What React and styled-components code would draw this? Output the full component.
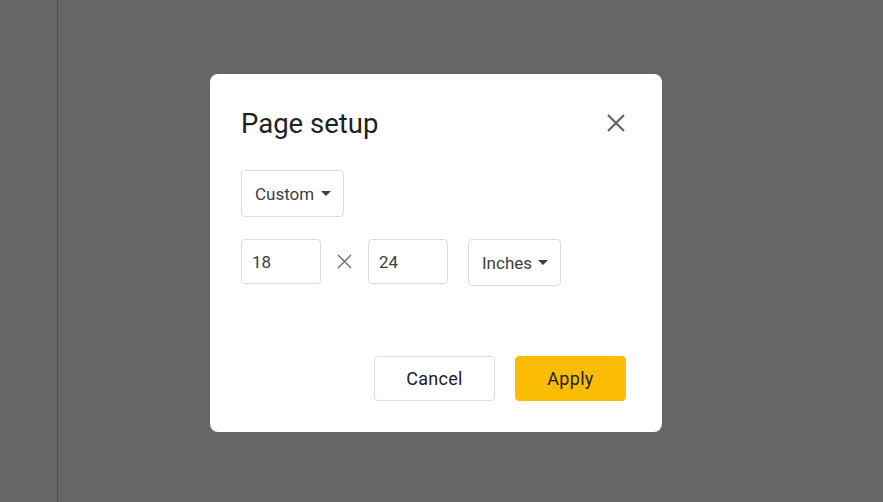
import styled, { createGlobalStyle } from 'styled-components'

const Global = createGlobalStyle`
  html, body {
    margin: 0;
    padding: 0;
    background: #666666;
    font-family: Roboto, 'Noto Sans', sans-serif;
  }
`

const App = () => {
  return (
    <>
      <Global />
      <Page>
        <Gutter />
        <Canvas />
      </Page>
      <Overlay>
        <Dialog>
          <Header>
            <Title>Page setup</Title>
            <CloseButton aria-label="Close">
              <svg width="20" height="20" viewBox="0 0 20 20">
                <path d="M2 2 L18 18 M18 2 L2 18" stroke="#5f6368" strokeWidth="2.2" fill="none" />
              </svg>
            </CloseButton>
          </Header>

          <Select $width={103}>
            Custom
            <Caret />
          </Select>

          <SizeRow>
            <NumberBox>18</NumberBox>
            <Times>
              <svg width="15" height="15" viewBox="0 0 15 15">
                <path d="M1 1 L14 14 M14 1 L1 14" stroke="#5f6368" strokeWidth="1.2" fill="none" />
              </svg>
            </Times>
            <NumberBox>24</NumberBox>
            <Select $width={93} $gapLeft={20}>
              Inches
              <Caret />
            </Select>
          </SizeRow>

          <Actions>
            <Button>Cancel</Button>
            <Button $primary>Apply</Button>
          </Actions>
        </Dialog>
      </Overlay>
    </>
  )
}

export default App

const Page = styled.div`
  display: flex;
  height: 100vh;
`
const Gutter = styled.div`
  width: 57px;
  border-right: 1px solid #4f4f4f;
`
const Canvas = styled.div`
  flex: 1;
`
const Overlay = styled.div`
  position: fixed;
  inset: 0;
  display: flex;
  align-items: flex-start;
  justify-content: flex-start;
  padding: 74px 0 0 210px;
`
const Dialog = styled.div`
  width: 452px;
  box-sizing: border-box;
  background: #fff;
  border-radius: 8px;
  padding: 32px 35px 31px 31px;
  display: flex;
  flex-direction: column;
  align-items: flex-start;
`
const Header = styled.div`
  width: 100%;
  display: flex;
  align-items: center;
  justify-content: space-between;
  margin-bottom: 28px;
`
const Title = styled.h1`
  margin: 0;
  font-size: 27.5px;
  line-height: 36px;
  font-weight: 400;
  color: #202124;
`
const CloseButton = styled.button`
  border: none;
  background: none;
  padding: 0;
  width: 22px;
  height: 22px;
  margin-top: -2px;
  display: flex;
  align-items: center;
  justify-content: center;
  cursor: pointer;
`
const Select = styled.div`
  box-sizing: border-box;
  width: ${p => p.$width}px;
  height: 47px;
  margin-left: ${p => p.$gapLeft || 0}px;
  border: 1px solid #dadce0;
  border-radius: 4px;
  display: flex;
  align-items: center;
  justify-content: space-between;
  padding: 0 12px 0 13px;
  font-size: 17px;
  color: #3c4043;
`
const Caret = styled.span`
  width: 0;
  height: 0;
  border-left: 5px solid transparent;
  border-right: 5px solid transparent;
  border-top: 5px solid #3c4043;
`
const SizeRow = styled.div`
  display: flex;
  align-items: flex-start;
  margin-top: 22px;
`
const NumberBox = styled.div`
  box-sizing: border-box;
  width: 80px;
  height: 45px;
  border: 1px solid #dadce0;
  border-radius: 4px;
  display: flex;
  align-items: center;
  padding-left: 10px;
  font-size: 17px;
  color: #3c4043;
`
const Times = styled.div`
  width: 47px;
  height: 45px;
  display: flex;
  align-items: center;
  justify-content: center;
`
const Actions = styled.div`
  width: 100%;
  display: flex;
  justify-content: flex-end;
  gap: 20px;
  margin-top: 70px;
  padding-right: 1px;
  box-sizing: border-box;
`
const Button = styled.button`
  box-sizing: border-box;
  height: 45px;
  width: ${p => (p.$primary ? 111 : 121)}px;
  border-radius: 4px;
  border: 1px solid ${p => (p.$primary ? '#fbbc04' : '#dadce0')};
  background: ${p => (p.$primary ? '#fbbc04' : '#fff')};
  color: #202124;
  font-family: Roboto, 'Noto Sans', sans-serif;
  font-size: 18px;
  letter-spacing: 0.3px;
  cursor: pointer;
`
